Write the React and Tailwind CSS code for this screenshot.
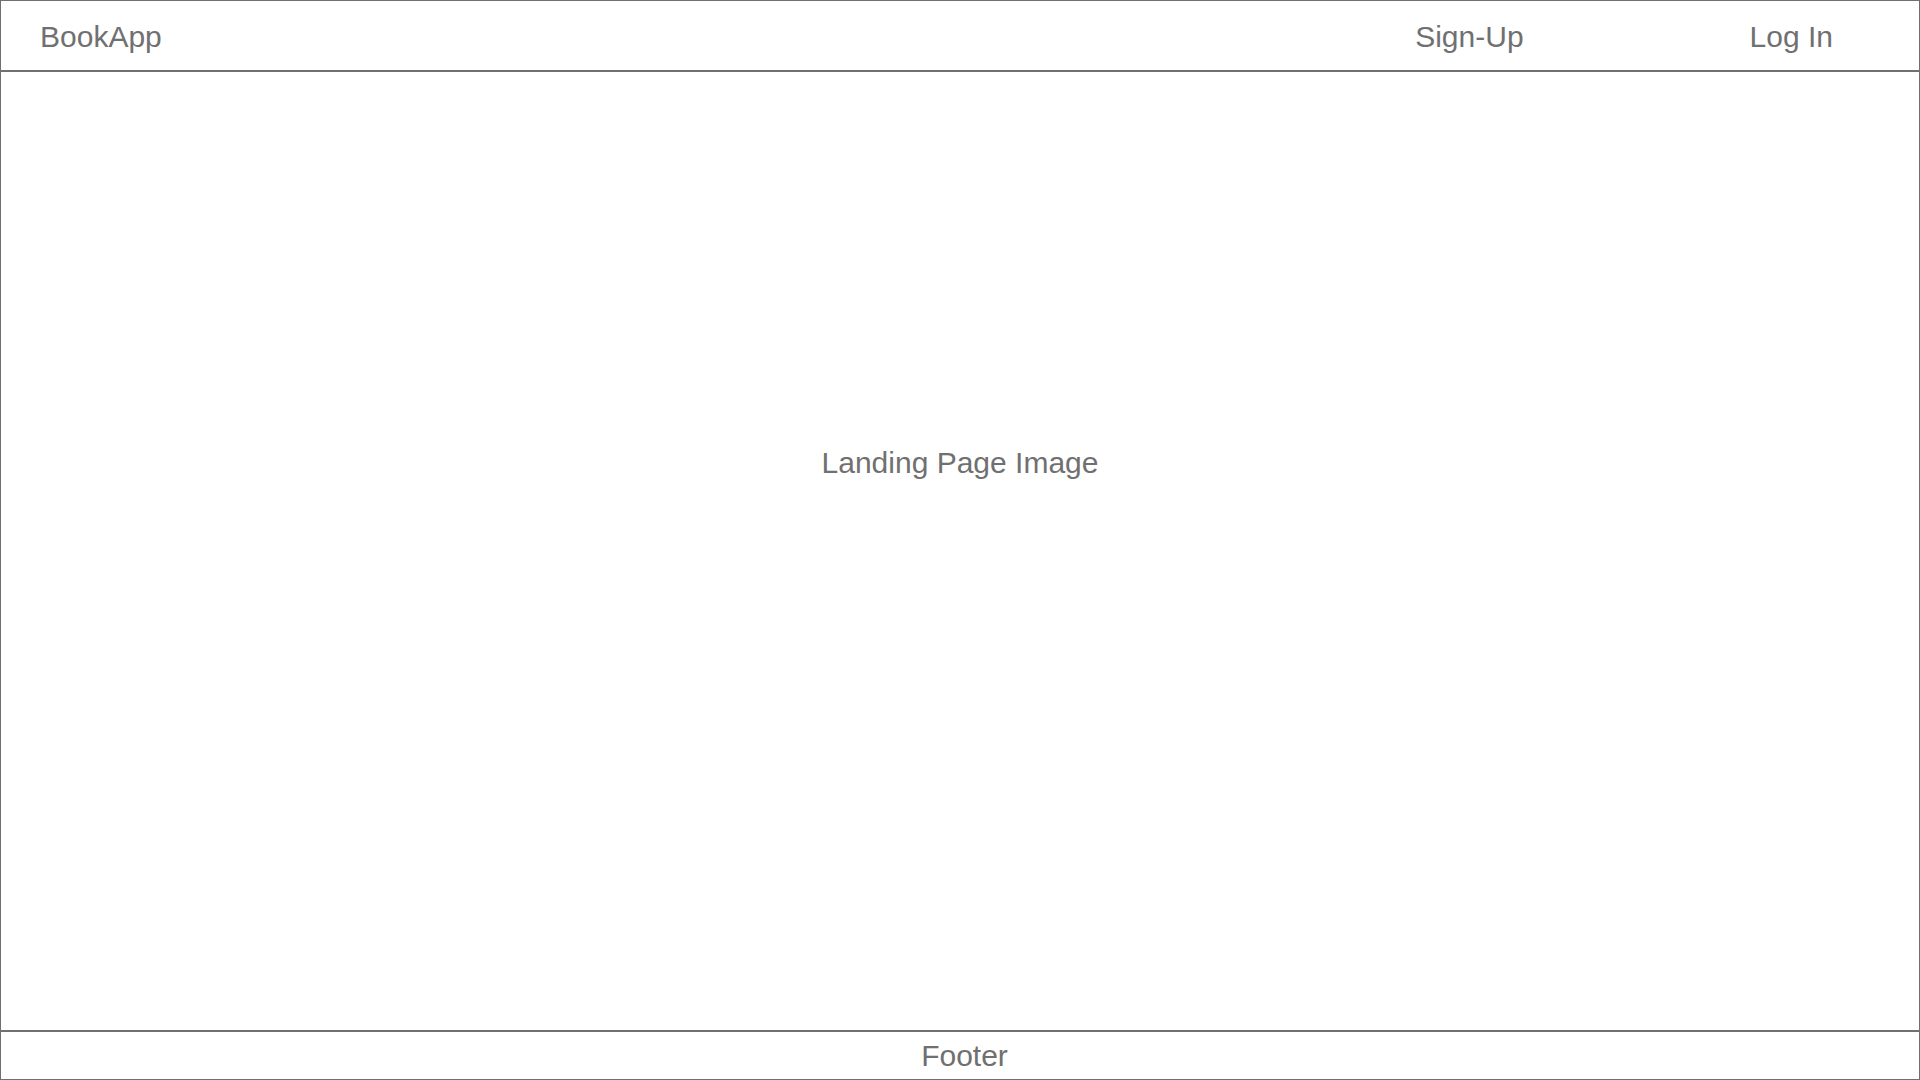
import React from 'react';

const App = () => {
  return (
    <div
      className="h-screen w-full flex flex-col bg-white border border-[#707070] text-[#707070] text-[30px]"
      style={{ fontFamily: '"Liberation Sans", Arial, sans-serif' }}
    >
      {/* Header */}
      <header className="h-[71px] shrink-0 flex items-center border-b-2 border-[#707070] pt-[3px] pl-[39px] pr-[86px]">
        <div className="leading-[36px]">BookApp</div>
        <nav className="ml-auto flex items-center gap-[226px] leading-[36px]">
          <a className="cursor-pointer">Sign-Up</a>
          <a className="cursor-pointer">Log In</a>
        </nav>
      </header>

      {/* Landing image placeholder */}
      <main className="flex-1 pt-[373px] text-center">
        <div className="leading-[36px]">Landing Page Image</div>
      </main>

      {/* Footer */}
      <footer className="h-[49px] shrink-0 flex items-center justify-center border-t-2 border-[#707070] pl-[9px]">
        <div className="leading-[36px]">Footer</div>
      </footer>
    </div>
  );
};

export default App;
